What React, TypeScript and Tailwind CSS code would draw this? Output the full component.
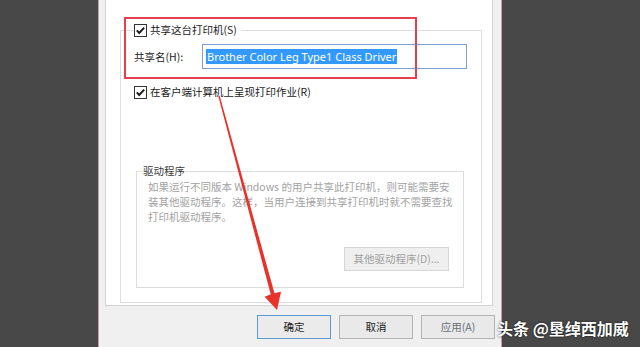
import React from 'react';

// Printer properties "共享" tab with red annotation, recreated

const cjk = "font-['Noto_Sans_CJK_SC','Noto_Sans',sans-serif]";

function CheckBox() {
  return (
    <svg width="13" height="13" viewBox="0 0 13 13" className="shrink-0">
      <rect x="0.5" y="0.5" width="12" height="12" fill="#fff" stroke="#333" />
      <path d="M2.8 6.4 L5.2 9 L10.2 3.6" fill="none" stroke="#1a1a1a" strokeWidth="1.9" />
    </svg>
  );
}

function WinButton({ label, primary, disabled, className = '' }: { label: string; primary?: boolean; disabled?: boolean; className?: string }) {
  return (
    <div
      className={
        'flex items-center justify-center h-[24px] border text-[10.5px] leading-[14px] ' +
        (primary ? 'border-[#5b9bd5] bg-[#ebebeb] text-[#1a1a1a] ' : '') +
        (!primary && !disabled ? 'border-[#b4b4b4] bg-[#e9e9e9] text-[#1a1a1a] ' : '') +
        (disabled ? 'border-[#d6d6d6] bg-[#efefef] text-[#a0a0a0] ' : '') +
        className
      }
    >
      {label}
    </div>
  );
}

export default function App() {
  return (
    <div className={`relative w-[640px] h-[347px] overflow-hidden flex bg-[#484848] text-[#1a1a1a] ${cjk}`}>
      {/* left backdrop */}
      <div className="w-[98px] shrink-0" />

      {/* dialog */}
      <div className="w-[404px] shrink-0 border-x border-[#c99aac] bg-[#f0f0f0] flex flex-col">
        <div className="flex pl-[6px]">
          {/* tab page */}
          <div className="w-[388px] h-[306px] bg-white border-x border-b border-[#d3d3d3] flex flex-col">
            <fieldset className="mt-[23px] ml-[14px] w-[362px] h-[280px] p-0 m-0 border border-[#dedede]">
              <legend className="ml-[13px] pr-[4px] flex items-center gap-[3px] h-[14px]">
                <CheckBox />
                <span className="text-[10.5px] leading-[14px]">共享这台打印机(S)</span>
              </legend>

              {/* share name */}
              <div className="flex items-center mt-[7px] pl-[13px]">
                <span className="w-[68px] text-[10.5px] leading-[14px]">共享名(H):</span>
                <div className="w-[265px] h-[25px] border border-[#7d9fd8] bg-white flex items-center pl-[3px]">
                  <span className="bg-[#3399ff] text-white text-[11px] leading-[15px] font-['Noto_Sans',sans-serif] px-[1px]">
                    Brother Color Leg Type1 Class Driver
                  </span>
                </div>
              </div>

              {/* render jobs */}
              <div className="flex items-center gap-[3px] mt-[16px] pl-[13px] h-[14px]">
                <CheckBox />
                <span className="text-[10.5px] leading-[14px]">在客户端计算机上呈现打印作业(R)</span>
              </div>

              {/* drivers group */}
              <fieldset className="mt-[65px] ml-[15px] w-[328px] h-[124px] p-0 m-0 border border-[#dcdcdc]">
                <legend className="ml-[5px] px-[1px] text-[10.5px] leading-[14px] text-[#3c3c3c]">驱动程序</legend>
                <div className="mt-[1px] pl-[11px] text-[10.5px] leading-[15px] text-[#a2a2a2]">
                  <div>如果运行不同版本 Windows 的用户共享此打印机，则可能需要安</div>
                  <div>装其他驱动程序。这样，当用户连接到共享打印机时就不需要查找</div>
                  <div>打印机驱动程序。</div>
                </div>
                <div className="flex justify-end mt-[23px] pr-[14px]">
                  <WinButton label="其他驱动程序(D)..." disabled className="w-[105px]" />
                </div>
              </fieldset>
            </fieldset>
          </div>
        </div>

        {/* dialog buttons */}
        <div className="flex justify-end gap-[8px] mt-[9px] pr-[6px]">
          <WinButton label="确定" primary className="w-[74px]" />
          <WinButton label="取消" className="w-[74px]" />
          <WinButton label="应用(A)" className="w-[74px] !text-[#6a6e78]" />
        </div>
      </div>

      {/* annotation: red box */}
      <div className="absolute left-[124px] top-[17px] w-[293px] h-[62px] border-2 border-[#e3404b] pointer-events-none" />

      {/* annotation: red arrow */}
      <svg className="absolute left-0 top-0 pointer-events-none" width="640" height="347" viewBox="0 0 640 347">
        <polygon points="219.7,95.8 218.3,96.2 270.9,295.1 274.7,294.1" fill="#e8332c" />
        <polygon points="277,310 264.6,296.8 272.8,293.6 281,291.8" fill="#e8332c" />
      </svg>

      {/* watermark */}
      <div className="absolute left-[497px] top-[317px] text-white text-[16px] leading-[22px] font-bold whitespace-nowrap [text-shadow:0_0_2px_rgba(0,0,0,0.9)]">
        头条 @垦绰西加威
      </div>
    </div>
  );
}
